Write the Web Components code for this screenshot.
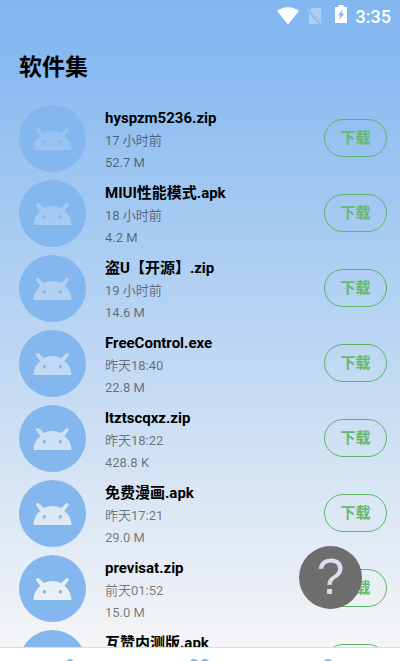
<!DOCTYPE html>
<html lang="zh-CN">
<head>
<meta charset="utf-8">
<meta name="viewport" content="width=device-width, initial-scale=1">
<title>软件集</title>
<style>
html, body { margin: 0; height: 100%; }
body { font-family: Roboto, "Noto Sans CJK SC", sans-serif; color: #000; overflow: hidden; }
</style>
</head>
<body>
<app-shell>
  <status-bar slot="status" time="3:35"></status-bar>
  <span slot="heading">软件集</span>
  <file-row name="hyspzm5236.zip" time="17 小时前" size="52.7 M"></file-row>
  <file-row name="MIUI性能模式.apk" time="18 小时前" size="4.2 M"></file-row>
  <file-row name="盗U【开源】.zip" time="19 小时前" size="14.6 M"></file-row>
  <file-row name="FreeControl.exe" time="昨天18:40" size="22.8 M"></file-row>
  <file-row name="ltztscqxz.zip" time="昨天18:22" size="428.8 K"></file-row>
  <file-row name="免费漫画.apk" time="昨天17:21" size="29.0 M"></file-row>
  <file-row name="previsat.zip" time="前天01:52" size="15.0 M"></file-row>
  <file-row name="互赞内测版.apk"></file-row>
  <tab-bar slot="tabs"></tab-bar>
  <help-button slot="help">?</help-button>
</app-shell>
<script>
const define = (tag, render) => customElements.define(tag, class extends HTMLElement {
  constructor() {
    super();
    this.attachShadow({ mode: 'open' }).innerHTML = render(this);
  }
});

define('app-shell', () => `
<style>
:host { display: flex; flex-direction: column; height: 100vh; position: relative; overflow: hidden;
  background: linear-gradient(#84b7f0 0, #84b8f0 6%, #f5f5f6 98%); }
main { flex: 1; min-height: 0; overflow: hidden; }
h1 { margin: 0; padding: 19px 19px 20px; font-size: 23px; line-height: 34px; font-weight: 700; }
.list { display: flex; flex-direction: column; gap: 8px; padding: 0 13px 0 19px; }
</style>
<slot name="status"></slot>
<main><h1><slot name="heading"></slot></h1><div class="list"><slot></slot></div></main>
<slot name="tabs"></slot>
<slot name="help"></slot>`);

define('status-bar', el => `
<style>
:host { display: flex; align-items: center; justify-content: flex-end; height: 32px; padding-right: 9px; color: #fff; }
svg { display: block; }
.wifi { margin-right: 8px; } .sim { margin-right: 12px; } .battery { margin: 0 9px 4px 0; }
time { font-size: 18px; font-weight: 500; line-height: 32px; padding-top: 2px; }
</style>
<svg class="wifi" width="22" height="18" viewBox="0 0 22 18" aria-hidden="true"><path fill="#fff" d="M11 17.5 0 4C6-1 16-1 22 4Z"/></svg>
<svg class="sim" width="16" height="18" viewBox="0 0 16 18" aria-hidden="true"><path fill="#fff" fill-opacity=".33" d="M5 1h9v13.5L3 3.5ZM2 6l10 11H2Z"/><path stroke="#bdcbd8" stroke-opacity=".7" stroke-width="1.3" d="M1 2.5 15 17"/></svg>
<svg class="battery" width="12" height="18" viewBox="0 0 12 18" aria-hidden="true"><path fill="#fff" fill-rule="evenodd" d="M3.5 0h5v2H12v16H0V2h3.5ZM8 4 3 10.5h2.5L4 15l5.5-6.5H6.7Z"/></svg>
<time>${el.getAttribute('time')}</time>`);

define('app-icon', () => `
<style>:host { display: block; width: 67px; height: 67px; } svg { display: block; width: 100%; height: 100%; }</style>
<svg viewBox="0 0 67 67" aria-hidden="true">
<path fill="#84b7ee" fill-rule="evenodd" d="M33.500 0a33.500 33.500 0 1 0 0 67a33.500 33.500 0 1 0 0-67Z
M14.500 45C14.800 38.500 17.500 33.800 21.300 31L17.100 25.200Q16.600 23.800 17.900 23.100Q19.300 22.500 20.300 23.700L24.700 28Q33 23.800 42.300 28L46.600 23.700Q47.700 22.500 49 23.200Q50.200 24 49.500 25.400L45.400 31C49.500 33.800 52.200 38.500 52.500 45Z
M25.400 35a1.700 1.700 0 1 0 0 3.400a1.700 1.700 0 1 0 0-3.400ZM41.400 35a1.700 1.700 0 1 0 0 3.400a1.700 1.700 0 1 0 0-3.400Z"/></svg>`);

define('file-row', el => `
<style>
:host { display: flex; align-items: flex-start; height: 67px; flex: none; }
.info { flex: 1; min-width: 0; margin-left: 19px; padding-top: 2px; }
h2 { margin: 0; font-size: 15px; line-height: 22px; font-weight: 700; white-space: nowrap; }
p { margin: 0; font-size: 13px; line-height: 22px; color: rgba(0, 0, 0, .5); }
h2 + p { margin-top: 1px; }
button { box-sizing: border-box; width: 63px; height: 38px; margin: 14px 0 0; padding: 0; border: 1px solid #5db56a; border-radius: 19px;
  background: none; color: #66b96e; font: inherit; font-size: 15px; font-weight: 700; line-height: 22px; }
</style>
<app-icon></app-icon>
<div class="info"><h2>${el.getAttribute('name')}</h2><p>${el.getAttribute('time') || ''}</p><p>${el.getAttribute('size') || ''}</p></div>
<button type="button">下载</button>`);

define('tab-bar', () => `
<style>
:host { display: block; flex: none; height: 13px; overflow: hidden; background: #fff; border-top: 1px solid #dcdde0; }
nav { display: grid; grid-template-columns: repeat(3, 1fr); }
button { display: flex; justify-content: center; border: 0; padding: 11px 0 0; background: none; }
svg { display: block; fill: none; stroke: #87b5d9; stroke-width: 2; }
</style>
<nav aria-label="导航">
<button type="button" aria-label="首页"><svg width="24" height="24" viewBox="0 0 24 24"><path d="M6 22V10l6-7q3-4 6 0l6 7v12Z"/></svg></button>
<button type="button" aria-label="软件"><svg width="24" height="24" viewBox="0 0 24 24"><circle cx="6" cy="5" r="4"/><circle cx="17" cy="5" r="4"/><circle cx="6" cy="17" r="4"/><circle cx="17" cy="17" r="4"/></svg></button>
<button type="button" aria-label="我的"><svg width="24" height="24" viewBox="0 0 24 24"><circle cx="7" cy="5" r="4"/><path d="M0 23q7-16 14 0"/></svg></button>
</nav>`);

define('help-button', () => `
<style>
:host { position: absolute; right: 38px; bottom: 52px; }
button { display: grid; place-items: center; width: 63px; height: 63px; padding: 0; border: 0; border-radius: 50%;
  background: #6e6e6e; color: #d9e0e8; font: 50px/63px "Liberation Sans", sans-serif; }
</style>
<button type="button" aria-label="帮助"><slot></slot></button>`);
</script>
</body>
</html>
